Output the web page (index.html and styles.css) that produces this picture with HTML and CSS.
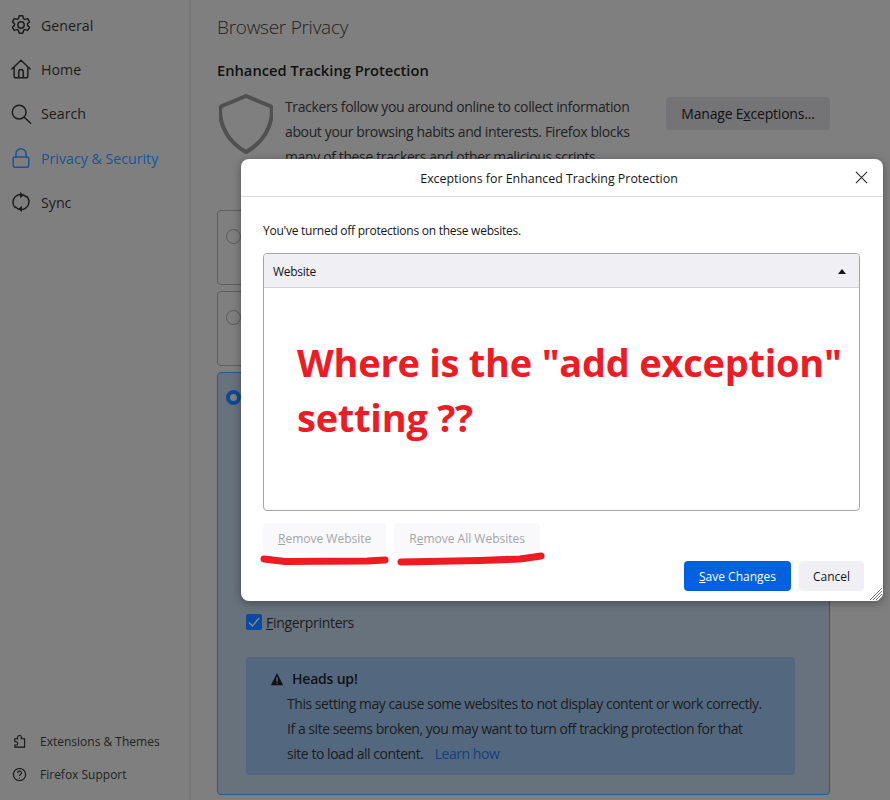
FILE: index.html
```html
<!DOCTYPE html>
<html lang="en">
<head>
<meta charset="utf-8">
<title>Browser Privacy</title>
<link rel="stylesheet" href="styles.css">
</head>
<body>
<div class="app">
  <aside class="sidebar">
    <nav class="nav">
      <a class="nav-item"><svg class="nav-icon" viewBox="0 0 24 24"><path d="M10 2h4l.7 3 1.600.9 3-.9 2 3.400-2.200 2.100v1.900l2.200 2.100-2 3.400-3-.9-1.600.9-.7 3h-4l-.7-3-1.600-.9-3 .9-2-3.400 2.200-2.100v-1.900L2.700 8.400l2-3.400 3 .9L9.300 5z"/><circle cx="12" cy="12" r="3.500"/></svg>General</a>
      <a class="nav-item"><svg class="nav-icon" viewBox="0 0 24 24"><path d="M2 12 12 2.500 22 12M4.500 10v9.500a2 2 0 0 0 2 2h11a2 2 0 0 0 2-2V10M9.500 21.500V15a2.500 2.500 0 0 1 5 0v6.500"/></svg>Home</a>
      <a class="nav-item"><svg class="nav-icon" viewBox="0 0 24 24"><circle cx="10" cy="10" r="7.500"/><path d="m15.500 15.500 7 6.500"/></svg>Search</a>
      <a class="nav-item active"><svg class="nav-icon" viewBox="0 0 24 24"><path d="M6.500 11V7.500a5.500 5.500 0 0 1 11 0V11"/><rect x="3.500" y="11" width="17" height="11" rx="2"/></svg>Privacy &amp; Security</a>
      <a class="nav-item"><svg class="nav-icon" viewBox="0 0 24 24"><path d="M18 6.500A8 8 0 0 0 5.500 18M6 17.500A8 8 0 0 0 18.500 6"/><path class="solid" d="m11 1 4 3.500-4 3.500zM13 23l-4-3.500 4-3.500z"/></svg>Sync</a>
    </nav>
    <div class="nav-footer">
      <a class="foot-item"><svg class="foot-icon" viewBox="0 0 16 16"><path d="M3 5h3V3.500a2 2 0 0 1 4 0V5h3.500v9H3v-2.200h1.300a1.800 1.800 0 0 0 0-3.600H3z"/></svg>Extensions &amp; Themes</a>
      <a class="foot-item"><svg class="foot-icon" viewBox="0 0 16 16"><circle cx="8" cy="8" r="6.500"/><path d="M6 6.300a2 2 0 1 1 3 1.700c-.7.400-1 .8-1 1.700"/><path d="M8 11.300v1"/></svg>Firefox Support</a>
    </div>
  </aside>
  <main class="content">
    <h1 class="page-title">Browser Privacy</h1>
    <h2 class="section-title">Enhanced Tracking Protection</h2>
    <section class="etp">
      <svg class="shield" viewBox="0 0 54 60"><path d="M27 2 51 12c2 1 2 2 2 4 0 16-8 32-26 42C9 48 1 32 1 16c0-2 0-3 2-4z"/></svg>
      <p class="etp-text">Trackers follow you around online to collect information about your browsing habits and interests. Firefox blocks many of these trackers and other malicious scripts.</p>
      <button class="manage-btn">Manage E<u>x</u>ceptions...</button>
    </section>
    <section class="cards">
      <div class="card card-s"><span class="radio"></span></div>
      <div class="card card-s"><span class="radio"></span></div>
      <div class="card card-custom">
        <span class="radio radio-on"></span>
        <label class="check-row"><span class="check"><svg viewBox="0 0 16 16"><path d="m3 8.500 3.500 3.500L13 4"/></svg></span><span><u>F</u>ingerprinters</span></label>
        <div class="warning">
          <h3 class="warning-title"><svg class="warn-icon" viewBox="0 0 16 16"><path d="M8 1 15 15H1z"/><path class="mark" d="M8 6v5M8 12.200v1.300"/></svg>Heads up!</h3>
          <p class="warning-text">This setting may cause some websites to not display content or work correctly. If a site seems broken, you may want to turn off tracking protection for that site to load all content. <a class="learn">Learn how</a></p>
        </div>
      </div>
    </section>
  </main>
</div>

<div class="dialog">
  <header class="dialog-head">
    <span class="dialog-title">Exceptions for Enhanced Tracking Protection</span>
    <svg class="close" viewBox="0 0 14 14"><path d="m1 1 12 12M13 1 1 13"/></svg>
  </header>
  <div class="dialog-body">
    <p class="dialog-desc">You've turned off protections on these websites.</p>
    <div class="list">
      <div class="list-head"><span>Website</span><span class="sort"></span></div>
      <div class="list-body"></div>
    </div>
    <div class="remove-row">
      <button class="btn btn-disabled"><u>R</u>emove Website</button>
      <button class="btn btn-disabled">R<u>e</u>move All Websites</button>
    </div>
    <div class="action-row">
      <button class="btn btn-primary"><u>S</u>ave Changes</button>
      <button class="btn btn-plain">Cancel</button>
    </div>
  </div>
  <svg class="grip" viewBox="0 0 12 12"><path d="M12 0 0 12M12 3 3 12M12 6 6 12M12 9 9 12"/></svg>
</div>

<p class="annotation">Where is the "add exception"<br>setting ??</p>
<svg class="scribble" viewBox="0 0 890 800"><path d="M264 559 285 561.500 367 561 385 560"/><path d="M401 562 480 560.500 520 559 541 556"/></svg>
</body>
</html>
```
FILE: styles.css
```css
* { box-sizing: border-box; }
html, body { margin: 0; height: 100%; overflow: hidden; }
body {
  background: #7f7f7f;
  color: #111;
  font-family: "Open Sans", "Noto Sans", sans-serif;
  font-size: 14px;
}
button { font: inherit; border: 0; padding: 0; }

.app { display: flex; width: 890px; height: 800px; overflow: hidden; }

.sidebar {
  width: 191px;
  flex: none;
  border-right: 2px solid #767676;
  display: flex;
  flex-direction: column;
  justify-content: space-between;
  padding: 3px 0 15px 10px;
}
.nav { display: flex; flex-direction: column; }
.nav-item {
  display: flex;
  align-items: center;
  gap: 9px;
  height: 44.300px;
  color: #1c1c1c;
  font-size: 14.200px;
}
.nav-item.active { color: #17549c; }
.nav-icon { width: 22px; height: 22px; flex: none; fill: none; stroke: currentColor; stroke-width: 1.600; stroke-linejoin: round; stroke-linecap: round; }
.nav-icon .solid { fill: currentColor; stroke: none; }
.nav-footer { display: flex; flex-direction: column; gap: 11px; padding-left: 2px; }
.foot-item { display: flex; align-items: center; gap: 13px; height: 22px; font-size: 12px; color: #222; }
.foot-icon { width: 15px; height: 15px; flex: none; fill: none; stroke: #111; stroke-width: 1.100; }

.content { flex: 1; min-width: 0; padding: 0 60px 0 26px; }
.page-title { font-size: 19px; letter-spacing: -.27px; font-weight: 300; margin: 13px 0 0; line-height: 28px; color: #222; }
.section-title { font-size: 14.700px; font-weight: 600; margin: 14px 0 0; line-height: 30px; color: #111; }

.etp { display: flex; align-items: flex-start; margin-top: 9px; height: 116px; }
.shield { width: 54px; height: 60px; margin: 0 12px 0 2px; flex: none; fill: none; stroke: #505050; stroke-width: 4; stroke-linejoin: round; }
.etp-text { width: 355px; margin: 0; font-size: 14px; letter-spacing: -.37px; line-height: 25px; color: #222; }
.manage-btn { margin: 3px 0 0 auto; width: 164px; height: 33px; border-radius: 4px; background: #747476; color: #111; font-size: 14px; letter-spacing: -.2px; }

.cards { display: flex; flex-direction: column; gap: 6px; }
.card { border: 1px solid #5e5e5e; border-radius: 4px; padding: 18px 0 0 8px; }
.card-s { height: 75px; }
.card-custom { height: 423px; background: #68727d; border: 1px solid #1f5a99; padding: 17px 0 0 8px; }
.radio { display: block; width: 15px; height: 15px; border-radius: 50%; border: 1px solid #5a5a5a; }
.radio-on { border: 4px solid #0c4a96; background: #7f7f7f; }

.check-row { display: flex; align-items: center; gap: 4px; margin: 208px 0 0 20px; font-size: 14px; letter-spacing: -.3px; height: 18px; color: #1c1c1c; }
.check { width: 16px; height: 16px; border-radius: 2px; background: #0b4a9e; display: block; }
.check svg { display: block; fill: none; stroke: #7f8a95; stroke-width: 1.400; }
.warning { margin: 26px 0 0 20px; width: 549px; height: 118px; border-radius: 4px; background: #53687f; padding: 12px 31px 0 24px; }
.warning-title { display: flex; align-items: center; gap: 8px; margin: 0; font-size: 14px; font-weight: 600; letter-spacing: -.2px; line-height: 20px; color: #111; }
.warn-icon { width: 14px; height: 14px; flex: none; }
.warn-icon path { fill: #111; }
.warn-icon .mark { fill: none; stroke: #53687f; stroke-width: 1.600; }
.warning-text { margin: 2px 0 0 17px; font-size: 14px; letter-spacing: -.46px; line-height: 25px; color: #1c1c1c; }
.learn { color: #123f80; margin-left: 8px; }

.dialog {
  position: absolute;
  left: 241px;
  top: 159px;
  width: 642px;
  height: 442px;
  background: #fff;
  border-radius: 8px;
  box-shadow: 0 2px 10px rgba(0,0,0,.35);
  display: flex;
  flex-direction: column;
  font-size: 12px;
}
.dialog-head { height: 38px; flex: none; border-bottom: 1px solid #d9d9d9; display: flex; align-items: center; justify-content: center; padding: 1px 26px 0 0; position: relative; }
.dialog-title { font-size: 12.400px; color: #15141a; }
.close { position: absolute; right: 15px; top: 12px; width: 13px; height: 13px; fill: none; stroke: #222; stroke-width: 1.100; }
.dialog-body { flex: 1; padding: 0 22px; display: flex; flex-direction: column; }
.dialog-desc { margin: 25px 0 0; font-size: 12px; letter-spacing: -.25px; line-height: 18px; color: #15141a; }
.list { margin: 13px 1px 0 0; height: 258px; border: 1px solid #a3a3a3; border-radius: 4px; display: flex; flex-direction: column; overflow: hidden; }
.list-head { height: 34px; flex: none; display: flex; align-items: center; justify-content: space-between; padding: 1px 13px 0 9px; background: #f0f0f4; border-bottom: 1px solid #d4d4d8; color: #15141a; letter-spacing: -.3px; }
.sort { width: 0; height: 0; border: 4px solid transparent; border-top: 0; border-bottom: 5px solid #15141a; }
.list-body { flex: 1; }
.remove-row { display: flex; gap: 8px; margin-top: 12px; }
.btn { height: 30px; border-radius: 4px; font-size: 12px; }
.btn-disabled { background: #f9f9fb; color: #a5a5a8; padding: 0 15px; }
.action-row { display: flex; justify-content: flex-end; gap: 8px; margin: 8px -3px 0 0; }
.btn-primary { background: #0061e0; color: #fff; width: 107px; }
.btn-plain { background: #f0f0f4; color: #15141a; width: 65px; }
.grip { position: absolute; right: 1px; bottom: 1px; width: 12px; height: 12px; fill: none; stroke: #777; stroke-width: 1; }

.annotation {
  position: absolute;
  left: 297px;
  top: 335px;
  margin: 0;
  font-size: 38px;
  letter-spacing: -.25px;
  line-height: 55px;
  font-weight: 700;
  color: #ed1c24;
  white-space: nowrap;
}
.scribble { position: absolute; left: 0; top: 0; width: 890px; height: 800px; fill: none; stroke: #ed1c24; stroke-width: 7; stroke-linecap: round; stroke-linejoin: round; pointer-events: none; }
```
